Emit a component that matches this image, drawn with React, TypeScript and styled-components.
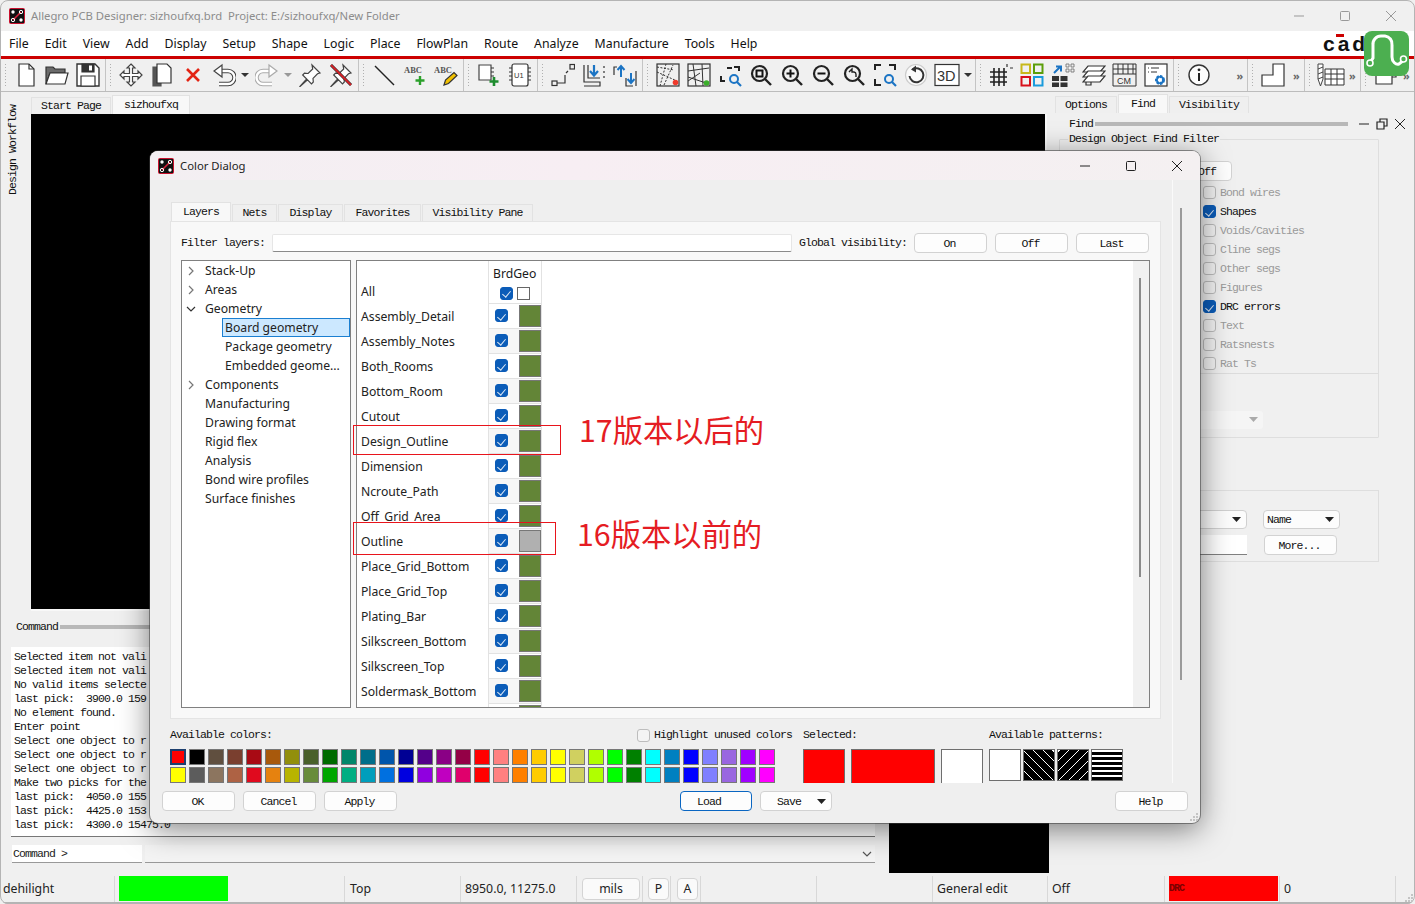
import React from "react";
import styled, { createGlobalStyle } from "styled-components";

const UI_FONT = `"Noto Sans", "Liberation Sans", sans-serif`;
const MONO_FONT = `"Liberation Mono", "DejaVu Sans Mono", monospace`;
const MONO_SPACING = "-0.9px";

const GlobalStyle = createGlobalStyle`
  html, body { margin: 0; padding: 0; background: #f0f0f0; overflow: hidden; }
  * { box-sizing: border-box; }
`;

// ---- shell ----
const AppWindow = styled.div`
  position: relative;
  width: 1415px;
  height: 904px;
  display: flex;
  flex-direction: column;
  background: #f0f0f0;
  overflow: hidden;
  font-family: ${UI_FONT};
  color: #1a1a1a;
  border-radius: 8px;
  outline: 1px solid #b4b4b4;
  outline-offset: -1px;
`;
const TitleBar = styled.div`
  height: 31px;
  flex: none;
  display: flex;
  align-items: center;
  padding-left: 9px;
  gap: 6px;
  color: #8c8c8c;
  font-size: 11.3px;
  white-space: pre;
`;
const WinControls = styled.div`
  margin-left: auto;
  display: flex;
  align-items: center;
  gap: 34px;
  padding-right: 18px;
`;
const MenuBar = styled.div`
  height: 28px;
  flex: none;
  background: #fff;
  border-bottom: 3px solid #cc0000;
  display: flex;
  align-items: center;
  padding-left: 9px;
  gap: 16px;
  font-size: 12.3px;
  color: #111;
`;
const CadenceMark = styled.div`
  position: relative;
  margin-left: auto;
  width: 92px;
  font-family: "Liberation Sans", sans-serif;
  font-weight: 700;
  font-size: 21px;
  letter-spacing: 3px;
  line-height: 25px;
  color: #111;
  &::before {
    content: "";
    position: absolute;
    left: 13px;
    top: 3px;
    width: 8px;
    height: 3px;
    background: #cc0000;
  }
`;
const GreenBadge = styled.div`
  position: absolute;
  left: 1364px;
  top: 31px;
  width: 45px;
  height: 45px;
  z-index: 2;
`;
const Toolbar = styled.div`
  height: 33px;
  flex: none;
  display: flex;
  padding-left: 1px;
  border-bottom: 1px solid #bcbcbc;
  overflow: hidden;
`;
const ToolGroup = styled.div`
  flex: none;
  display: flex;
  align-items: center;
  padding: 0 2px 0 3px;
  border-right: 1px solid #c4c4c4;
`;
const Handle = styled.span`
  width: 3px;
  height: 24px;
  margin-right: 3px;
  background-image: radial-gradient(circle, #b0b0b0 1px, transparent 1px);
  background-size: 3px 3px;
`;
const ToolCell = styled.span`
  flex: none;
  width: 31px;
  height: 26px;
  display: flex;
  align-items: center;
  justify-content: center;
`;
const Caret = styled.span<{ $w?: number; $muted?: boolean }>`
  flex: none;
  width: ${(p) => p.$w ?? 12}px;
  display: flex;
  justify-content: center;
  &::after {
    content: "";
    border-left: 4px solid transparent;
    border-right: 4px solid transparent;
    border-top: 4px solid ${(p) => (p.$muted ? "#999" : "#333")};
  }
`;
const More = styled.span<{ $w?: number; $gap?: number }>`
  flex: none;
  width: ${(p) => p.$w ?? 11}px;
  margin-left: ${(p) => p.$gap ?? 0}px;
  text-align: center;
  font-size: 11px;
  font-weight: 700;
  color: #666;
`;

// ---- main grid ----
const Workspace = styled.div`
  flex: 1;
  min-height: 0;
  display: grid;
  grid-template-columns: 31px 858px 160px 366px;
  grid-template-rows: 22px 497px 1fr;
  grid-template-areas:
    "strip tabs tabs side"
    "strip canvas canvas side"
    "command command lower side";
`;
const Strip = styled.div`
  grid-area: strip;
  display: flex;
  justify-content: center;
  padding: 13px 6px 0 0;
`;
const StripText = styled.span`
  writing-mode: vertical-rl;
  transform: rotate(180deg);
  height: 90px;
  font: 11.5px/12px ${MONO_FONT};
  letter-spacing: ${MONO_SPACING};
  color: #111;
  white-space: nowrap;
`;
const DocTabs = styled.div`
  grid-area: tabs;
  display: flex;
  align-items: flex-end;
`;
const TabBase = styled.div<{ $w: number; $active?: boolean }>`
  flex: none;
  width: ${(p) => p.$w}px;
  height: ${(p) => (p.$active ? 19 : 17)}px;
  margin-right: 1px;
  display: flex;
  align-items: center;
  justify-content: center;
  background: ${(p) => (p.$active ? "#f8f8f8" : "#efefef")};
  border: 1px solid #e2e2e2;
  border-bottom: none;
  font: 11.5px/12px ${MONO_FONT};
  letter-spacing: ${MONO_SPACING};
  color: #111;
  white-space: pre;
`;
const Canvas = styled.div`
  grid-area: canvas;
  background: #000;
  margin-right: 2px;
  border-right: 2px solid #f8f8f8;
  border-bottom: 2px solid #f8f8f8;
`;
const LowerCanvas = styled.div`
  grid-area: lower;
  background: #000;
  margin-top: -2px;
  margin-bottom: 2px;
`;
const CommandPane = styled.div`
  grid-area: command;
  display: flex;
  flex-direction: column;
  padding: 9px 14px 0 11px;
`;
const PaneTitle = styled.div`
  display: flex;
  align-items: center;
  height: 14px;
  padding-left: 5px;
  font: 11.5px/14px ${MONO_FONT};
  letter-spacing: ${MONO_SPACING};
  color: #111;
`;
const GripBar = styled.span`
  flex: 1;
  height: 4px;
  margin-left: 2px;
  background: #b8b8b8;
`;
const CommandLog = styled.pre`
  height: 190px;
  margin: 13px 0 0;
  padding: 3px 0 0 3px;
  background: #fff;
  border-bottom: 1px solid #777;
  overflow: hidden;
  font: 11.5px/14px ${MONO_FONT};
  letter-spacing: ${MONO_SPACING};
  color: #111;
`;
const CommandRow = styled.div`
  display: flex;
  gap: 3px;
  height: 18px;
  margin-top: 8px;
`;
const CommandLabel = styled.div`
  width: 130px;
  margin-left: 1px;
  background: #fff;
  border-bottom: 1px solid #999;
  font: 11.5px/17px ${MONO_FONT};
  letter-spacing: ${MONO_SPACING};
  padding-left: 1px;
  white-space: pre;
`;
const CommandInput = styled.div`
  flex: 1;
  display: flex;
  align-items: center;
  justify-content: flex-end;
  padding-right: 3px;
  background: #f4f4f4;
  border-bottom: 1px solid #999;
`;

// ---- right side ----
const SidePanel = styled.div`
  grid-area: side;
  display: flex;
  flex-direction: column;
  padding-left: 10px;
`;
const SideTabs = styled.div`
  display: flex;
  align-items: flex-end;
  height: 21px;
  margin-left: -4px;
`;
const DockHead = styled.div`
  display: flex;
  align-items: center;
  height: 17px;
  margin-top: 2px;
  padding-left: 10px;
  font: 11.5px/14px ${MONO_FONT};
  letter-spacing: ${MONO_SPACING};
  color: #111;
`;
const DockBar = styled.span`
  width: 253px;
  height: 4px;
  margin-left: 2px;
  background: #b8b8b8;
`;
const DockIcons = styled.span`
  display: flex;
  align-items: center;
  gap: 6px;
  margin-left: 10px;
`;
const FilterSet = styled.fieldset`
  width: 320px;
  height: 305px;
  margin: 1px 0 0;
  padding: 0;
  border: 1px solid #dedede;
  border-radius: 1px;
  display: flex;
  flex-direction: column;
`;
const FilterLegend = styled.legend`
  margin-left: 8px;
  padding: 0 1px;
  font: 11.5px/12px ${MONO_FONT};
  letter-spacing: ${MONO_SPACING};
  color: #111;
`;
const ButtonRow = styled.div`
  display: flex;
  justify-content: flex-end;
  padding: 16px 146px 0 0;
`;
const FindRows = styled.div`
  padding: 2px 0 0 143px;
  border-bottom: 1px solid #dcdcdc;
  height: 193px;
`;
const FindRow = styled.div<{ $on?: boolean }>`
  display: flex;
  align-items: center;
  gap: 4px;
  height: 19px;
  font: 11.5px/12px ${MONO_FONT};
  letter-spacing: ${MONO_SPACING};
  color: ${(p) => (p.$on ? "#111" : "#9a9a9a")};
  white-space: pre;
`;
const DisabledCombo = styled.div`
  width: 110px;
  height: 18px;
  margin: 37px 0 0 93px;
  padding-right: 5px;
  display: flex;
  align-items: center;
  justify-content: flex-end;
  background: #f5f5f5;
  border-radius: 3px;
`;
const PropsBox = styled.div`
  width: 320px;
  height: 72px;
  margin-top: 52px;
  padding: 19px 0 0 100px;
  border: 1px solid #dedede;
  display: grid;
  grid-template-columns: 87px 77px;
  grid-auto-rows: 20px;
  gap: 5px 16px;
`;
const ComboBox = styled.div<{ $w?: number }>`
  height: 19px;
  width: ${(p) => (p.$w ? `${p.$w}px` : "auto")};
  padding: 0 5px 0 3px;
  display: flex;
  align-items: center;
  justify-content: space-between;
  background: #fcfcfc;
  border: 1px solid #d0d0d0;
  border-radius: 4px;
  font: 11.5px/12px ${MONO_FONT};
  letter-spacing: ${MONO_SPACING};
  color: #111;
`;
const PlainInput = styled.div`
  height: 20px;
  background: #fff;
  border-bottom: 1px solid #808080;
`;

// ---- status bar ----
const StatusBar = styled.div`
  height: 29px;
  flex: none;
  display: flex;
  align-items: center;
  font-size: 12.3px;
  color: #222;
  border-bottom: 2px solid #b4b4b4;
`;
const StatusCell = styled.div<{ $w: number; $pad?: number }>`
  flex: none;
  width: ${(p) => p.$w}px;
  height: 26px;
  display: flex;
  align-items: center;
  padding-left: ${(p) => p.$pad ?? 4}px;
  border-right: 1px solid #d8d8d8;
  white-space: nowrap;
`;
const StatusFill = styled.div<{ $w: number; $color: string }>`
  width: ${(p) => p.$w}px;
  height: 25px;
  background: ${(p) => p.$color};
  font: 700 10px/25px ${MONO_FONT};
  color: #7a0000;
  letter-spacing: -1px;
`;
const StatusButton = styled.div<{ $w: number }>`
  width: ${(p) => p.$w}px;
  height: 22px;
  display: flex;
  align-items: center;
  justify-content: center;
  background: #fafafa;
  border: 1px solid #d4d4d4;
  border-radius: 4px;
`;

// ---- dialog ----
const Dialog = styled.div`
  position: absolute;
  left: 150px;
  top: 151px;
  width: 1050px;
  height: 672px;
  display: flex;
  flex-direction: column;
  background: #efefef;
  border-radius: 8px;
  box-shadow: 0 0 0 1px rgba(60, 60, 60, 0.55), 0 6px 30px rgba(0, 0, 0, 0.5);
  z-index: 1;
`;
const DialogHead = styled.div`
  height: 29px;
  flex: none;
  display: flex;
  align-items: center;
  gap: 6px;
  padding-left: 8px;
  border-radius: 8px 8px 0 0;
  background: linear-gradient(90deg, #f3eff2, #f7eef3 40%, #f4f0f1);
  font-size: 11.3px;
  color: #222;
`;
const DialogControls = styled.div`
  margin-left: auto;
  display: flex;
  align-items: center;
  gap: 34px;
  padding-right: 17px;
`;
const DialogMain = styled.div`
  height: 603px;
  flex: none;
  display: flex;
`;
const ScrollArea = styled.div`
  width: 1022px;
  flex: none;
  padding: 22px 0 0 20px;
  overflow: hidden;
`;
const ScrollRail = styled.div`
  flex: 1;
  display: flex;
  justify-content: center;
  padding: 28px 12px 0 0;
  border-left: 1px solid #fafafa;
`;
const RailThumb = styled.span`
  width: 2px;
  height: 472px;
  background: #9a9a9a;
`;
const TabStrip = styled.div`
  display: flex;
  align-items: flex-end;
  height: 19px;
  padding-left: 1px;
`;
const TabPanel = styled.div`
  width: 991px;
  height: 498px;
  padding: 11px 10px 0 10px;
  background: #f8f8f8;
  border: 1px solid #e4e4e4;
`;
const FilterRow = styled.div`
  display: flex;
  align-items: center;
  height: 20px;
`;
const MonoLabel = styled.span<{ $w?: number }>`
  flex: none;
  width: ${(p) => (p.$w ? `${p.$w}px` : "auto")};
  font: 11.5px/12px ${MONO_FONT};
  letter-spacing: ${MONO_SPACING};
  color: #111;
  white-space: pre;
`;
const FilterInput = styled.div`
  width: 520px;
  height: 18px;
  margin-right: 7px;
  background: #fff;
  border: 1px solid #e6e6e6;
  border-bottom-color: #8a8a8a;
  border-radius: 2px;
`;
const Button = styled.div<{ $w?: number; $focus?: boolean; $gap?: number; $between?: boolean; $pull?: number }>`
  flex: none;
  width: ${(p) => p.$w ?? 73}px;
  height: 20px;
  margin-left: ${(p) => p.$gap ?? 0}px;
  display: flex;
  align-items: center;
  justify-content: ${(p) => (p.$between ? "space-between" : "center")};
  padding: ${(p) => (p.$between ? "1px 5px 0 16px" : `1px ${p.$pull ?? 2}px 0 0`)};
  background: #fdfdfd;
  border: 1px solid ${(p) => (p.$focus ? "#0a66c2" : "#d2d2d2")};
  border-radius: 4px;
  font: 11.5px/12px ${MONO_FONT};
  letter-spacing: ${MONO_SPACING};
  color: #111;
`;
const Split = styled.div`
  display: flex;
  gap: 5px;
  margin-top: 7px;
  height: 448px;
`;
const TreePane = styled.div`
  width: 170px;
  flex: none;
  background: #fff;
  border: 1px solid #808080;
`;
const TreeRow = styled.div`
  height: 19px;
  display: flex;
  align-items: center;
  padding-left: 4px;
  font-size: 12.2px;
  white-space: nowrap;
  color: #222;
`;
const TreeArrow = styled.span`
  flex: none;
  width: 19px;
  display: flex;
  align-items: center;
`;
const TreeChild = styled.div<{ $selected?: boolean }>`
  height: 19px;
  margin-left: 40px;
  padding-left: 2px;
  display: flex;
  align-items: center;
  font-size: 12.2px;
  color: #222;
  white-space: nowrap;
  overflow: hidden;
  background: ${(p) => (p.$selected ? "#cce8ff" : "transparent")};
  border: 1px solid ${(p) => (p.$selected ? "#1b7fd1" : "transparent")};
`;
const LayerPane = styled.div`
  flex: 1;
  display: flex;
  background: #fff;
  border: 1px solid #808080;
  overflow: hidden;
`;
const LayerList = styled.div`
  flex: 1;
`;
const LayerRow = styled.div<{ $h?: number }>`
  display: flex;
  height: ${(p) => p.$h ?? 25}px;
`;
const LayerName = styled.div`
  width: 131px;
  flex: none;
  padding-left: 4px;
  display: flex;
  align-items: center;
  font-size: 12.2px;
  color: #222;
  white-space: nowrap;
`;
const LayerCell = styled.div<{ $alt?: boolean }>`
  width: 54px;
  flex: none;
  display: flex;
  align-items: center;
  padding: 0 0 1px 6px;
  background: ${(p) => (p.$alt ? "#f6f6f6" : "#fff")};
  border-left: 1px solid #e2e2e2;
  border-right: 1px solid #e2e2e2;
  border-bottom: 1px solid #e2e2e2;
`;
const HeadCell = styled(LayerCell)`
  padding: 6px 0 0 4px;
  font-size: 12.2px;
  border-bottom: none;
`;
const AllCell = styled(LayerCell)`
  padding: 5px 0 1px 11px;
  gap: 4px;
`;
const LayerSwatch = styled.span<{ $color: string }>`
  align-self: flex-end;
  width: 22px;
  height: 22px;
  margin-left: auto;
  background: ${(p) => p.$color};
  border: 1px solid #777;
`;
const EmptyBox = styled.span`
  width: 13px;
  height: 13px;
  background: #fff;
  border: 1px solid #666;
`;
const ListRail = styled.div`
  width: 16px;
  flex: none;
  padding: 17px 0 0 6px;
  background: #f1f1f1;
`;
const ListThumb = styled.div`
  width: 2px;
  height: 299px;
  background: #8a8a8a;
`;
const Check = styled.span<{ $on?: boolean }>`
  position: relative;
  flex: none;
  width: 13px;
  height: 13px;
  border-radius: 3px;
  background: ${(p) => (p.$on ? "#0b5cb8" : "#f4f4f4")};
  border: 1px solid ${(p) => (p.$on ? "#0b5cb8" : "#bdbdbd")};
  &::after {
    content: "";
    display: ${(p) => (p.$on ? "block" : "none")};
    position: absolute;
    left: 3px;
    top: 1.5px;
    width: 4px;
    height: 7px;
    border-right: 1px solid #dfe9f5;
    border-bottom: 1px solid #dfe9f5;
    transform: rotate(40deg);
  }
`;
const ColorSection = styled.div`
  display: flex;
  padding-top: 10px;
`;
const ColorCol = styled.div<{ $w: number }>`
  flex: none;
  width: ${(p) => p.$w}px;
`;
const ColorHead = styled.div`
  display: flex;
  align-items: center;
  justify-content: space-between;
  width: 622px;
  height: 12px;
  margin-bottom: 8px;
`;
const HighlightOpt = styled.span`
  display: flex;
  align-items: center;
  gap: 4px;
`;
const ColorGrid = styled.div`
  display: grid;
  grid-template-columns: repeat(32, 16px);
  grid-auto-rows: 16px;
  gap: 2px 3px;
`;
const ColorChip = styled.span<{ $color: string; $current?: boolean }>`
  background: ${(p) => p.$color};
  border: ${(p) => (p.$current ? "2px solid #1d3f6e" : "1px solid #777")};
`;
const SwatchRow = styled.div`
  display: flex;
`;
const BigSwatch = styled.span<{ $w: number; $color: string; $gap?: number }>`
  flex: none;
  width: ${(p) => p.$w}px;
  height: 42px;
  margin-left: ${(p) => p.$gap ?? 0}px;
  background: ${(p) => p.$color};
  border: 1px solid #6e6e6e;
`;
const PatternChip = styled.span<{ $fill: string; $gap?: number }>`
  flex: none;
  width: 32px;
  height: 32px;
  margin-left: ${(p) => p.$gap ?? 0}px;
  background: ${(p) => p.$fill};
  border: 1px solid #6e6e6e;
`;
const DialogFoot = styled.div`
  flex: 1;
  display: flex;
  align-items: flex-start;
  padding: 8px 12px 0;
  gap: 8px;
`;
const FootSpace = styled.span<{ $w?: number }>`
  flex: ${(p) => (p.$w ? "none" : "1")};
  width: ${(p) => p.$w ?? 0}px;
`;
const CornerGrip = styled.svg`
  position: absolute;
  right: 2px;
  bottom: 2px;
`;

// ---- annotations drawn over the dialog ----
const MarkBox = styled.div<{ $x: number; $y: number; $w: number; $h: number }>`
  position: absolute;
  left: ${(p) => p.$x}px;
  top: ${(p) => p.$y}px;
  width: ${(p) => p.$w}px;
  height: ${(p) => p.$h}px;
  border: 1px solid #e8141c;
  pointer-events: none;
`;
const MarkText = styled.div<{ $x: number; $y: number }>`
  position: absolute;
  left: ${(p) => p.$x}px;
  top: ${(p) => p.$y}px;
  font-family: "Noto Sans CJK SC", sans-serif;
  font-size: 30.3px;
  line-height: 36px;
  color: #e51c23;
  white-space: nowrap;
`;

// ---- drawings ----
const Ico: React.FC<{ size?: number; children: React.ReactNode }> = ({ size = 24, children }) => (
  <svg width={size} height={size} viewBox="0 0 24 24" fill="none" stroke="#333" strokeWidth={1.2}>
    {children}
  </svg>
);

const AppLogo = () => (
  <svg width="16" height="16" viewBox="0 0 16 16">
    <rect x="0" y="0" width="16" height="16" rx="2" fill="#c8102e" />
    <rect x="1" y="1" width="14" height="14" fill="#111" />
    <path d="M4 12L12 4" stroke="#d8203a" strokeWidth="1.6" />
    <circle cx="4" cy="4" r="1.7" fill="#fff" />
    <circle cx="12" cy="4" r="1.7" fill="none" stroke="#fff" />
    <circle cx="4" cy="12" r="1.7" fill="none" stroke="#fff" />
    <circle cx="12" cy="12" r="1.7" fill="#fff" />
  </svg>
);
const WinMin: React.FC<{ color: string }> = ({ color }) => (
  <svg width="12" height="12" viewBox="0 0 12 12"><path d="M1 6h10" stroke={color} /></svg>
);
const WinMax: React.FC<{ color: string }> = ({ color }) => (
  <svg width="12" height="12" viewBox="0 0 12 12"><rect x="1.5" y="1.5" width="9" height="9" rx="1" fill="none" stroke={color} /></svg>
);
const WinClose: React.FC<{ color: string }> = ({ color }) => (
  <svg width="12" height="12" viewBox="0 0 12 12"><path d="M1 1l10 10M11 1L1 11" stroke={color} /></svg>
);
const Chevron: React.FC<{ open?: boolean; color?: string }> = ({ open, color = "#777" }) => (
  <svg width="10" height="10" viewBox="0 0 10 10">
    <path d={open ? "M1 3l4 4 4-4" : "M3 1l4 4-4 4"} fill="none" stroke={color} strokeWidth="1.2" />
  </svg>
);
const DownTri: React.FC<{ color?: string }> = ({ color = "#222" }) => (
  <svg width="9" height="6" viewBox="0 0 9 6"><path d="M0 0h9L4.5 5z" fill={color} /></svg>
);

const Magnifier: React.FC<{ children?: React.ReactNode }> = ({ children }) => (
  <Ico>
    <circle cx="10.5" cy="10.5" r="7.5" strokeWidth={2.2} stroke="#222" />
    <path d="M16 16l6 6" strokeWidth={2.4} stroke="#222" />
    {children}
  </Ico>
);
const FrameZoom: React.FC<{ wide?: boolean }> = ({ wide }) => (
  <Ico>
    <path d={wide ? "M2 7V2h6M16 2h6v5M2 16v6h6" : "M9 5h5M3 13v5h4"} strokeWidth={2} stroke="#222" />
    {!wide && <path d="M16 4h5v4" strokeWidth={2} stroke="#222" />}
    <circle cx="16" cy="16" r="4" strokeWidth={2} stroke="#1b74c4" />
    <path d="M19 19l4 4" strokeWidth={2.2} stroke="#1b74c4" />
  </Ico>
);

const PinShape = "M14 2l8 8-2.5.8-4.5 4.6.3 3.6-1.8 1.8-4-4-8 7.2 7.2-8-4-4 1.8-1.8 3.6.3 4.6-4.5z";

const tools = {
  newDoc: (
    <Ico>
      <path d="M5 1h10l5 5v17H5z" fill="#fff" />
      <path d="M15 1v5h5" />
    </Ico>
  ),
  open: (
    <Ico>
      <path d="M1 21V4h7l2 2h10v4H5z" fill="#6a6a6a" />
      <path d="M1 21L5 10h18l-3 11z" fill="#fff" />
    </Ico>
  ),
  save: (
    <Ico>
      <path d="M1 1h18l4 4v18H1z" fill="#fff" strokeWidth={1.4} />
      <path d="M6 1h12v8H6z" fill="#333" />
      <path d="M13 2.5h3v5h-3z" fill="#fff" stroke="none" />
      <path d="M5 13h14v10H5z" fill="#fff" />
    </Ico>
  ),
  move: (
    <Ico>
      <path
        d="M12 1l4 4h-2.5v5.5H19V8l4 4-4 4v-2.5h-5.5V19H16l-4 4-4-4h2.5v-5.5H5V16l-4-4 4-4v2.5h5.5V5H8z"
        fill="#fff"
        stroke="#444"
      />
    </Ico>
  ),
  copy: (
    <Ico>
      <path d="M3 4h8v19H3z" fill="#555" stroke="#555" />
      <path d="M7 1h10l4 4v15H7z" fill="#fff" />
    </Ico>
  ),
  remove: (
    <Ico>
      <path d="M6 6l12 12M18 6L6 18" stroke="#e32414" strokeWidth={2.6} />
    </Ico>
  ),
  undo: (
    <Ico>
      <path d="M8 8h8a6 6 0 0 1 0 13H7" stroke="#444" strokeWidth={4.5} />
      <path d="M8 8h8a6 6 0 0 1 0 13H7" stroke="#fff" strokeWidth={2.4} />
      <path d="M10 2L2 8l8 6z" fill="#fff" stroke="#444" />
    </Ico>
  ),
  redo: (
    <Ico>
      <path d="M16 8H8a6 6 0 0 0 0 13h9" stroke="#aaa" strokeWidth={4.5} />
      <path d="M16 8H8a6 6 0 0 0 0 13h9" stroke="#fff" strokeWidth={2.4} />
      <path d="M14 2l8 6-8 6z" fill="#fff" stroke="#aaa" />
    </Ico>
  ),
  pin: (
    <Ico>
      <path d={PinShape} fill="#fff" stroke="#444" />
    </Ico>
  ),
  unpin: (
    <Ico>
      <path d={PinShape} fill="#fff" stroke="#444" />
      <path d="M2 2l20 20" stroke="#222" strokeWidth={3} />
      <path d="M2 2l20 20" stroke="#d8242a" strokeWidth={1.8} />
    </Ico>
  ),
  line: (
    <Ico>
      <path d="M3 3l19 19" stroke="#222" strokeWidth={1.4} />
    </Ico>
  ),
  abcAdd: (
    <Ico>
      <text x="1" y="10" fontFamily="Liberation Serif" fontWeight="700" fontSize="8.5" fill="#555" stroke="none">ABC</text>
      <path d="M17 13v9M12.5 17.5h9" stroke="#2ba02b" strokeWidth={2.4} />
    </Ico>
  ),
  abcEdit: (
    <Ico>
      <text x="0" y="10" fontFamily="Liberation Serif" fontWeight="700" fontSize="8.5" fill="#555" stroke="none">ABC</text>
      <path d="M10 22l1.5-5L20 9.5l3 3-8.5 8z" fill="#f2c100" stroke="#333" />
    </Ico>
  ),
  part: (
    <Ico>
      <path d="M2 2h12v15H2z" fill="#fff" stroke="#444" />
      <path d="M14 5h3M14 9h3M14 13h3" />
      <path d="M17 14v9M12.5 18.5h9" stroke="#1e8c2e" strokeWidth={2.6} />
    </Ico>
  ),
  chip: (
    <Ico>
      <rect x="4" y="1" width="16" height="22" rx="2" fill="#fff" />
      <path d="M1 5h3M1 9h3M1 13h3M1 17h3M20 5h3M20 9h3M20 13h3M20 17h3" />
      <text x="6" y="15" fontFamily="Liberation Sans" fontSize="7.5" fill="#333" stroke="none">U1</text>
    </Ico>
  ),
  route: (
    <Ico>
      <rect x="1" y="18" width="5" height="4.5" />
      <path d="M6 20h8v-8" />
      <path d="M15 10l2-2" />
      <rect x="19" y="1.5" width="4.5" height="4.5" />
    </Ico>
  ),
  slide: (
    <Ico>
      <path d="M2 2v17h16v4H2M6 2v13h12" />
      <path d="M12 2v9M8 8l4 4.5L16 8" stroke="#1b74c4" strokeWidth={2.2} />
      <path d="M22 3v2M22 8v2M22 13v2" />
    </Ico>
  ),
  swap: (
    <Ico>
      <path d="M1 12V4h3M20 23h-7v-8M23 8v15" />
      <path d="M8 14V3M4.5 7L8 3l3.5 4" stroke="#1b74c4" strokeWidth={2} />
      <path d="M18 10v10M14.5 16l3.5 4 3.5-4" stroke="#1b74c4" strokeWidth={2} />
    </Ico>
  ),
  ratsRed: (
    <Ico>
      <rect x="1" y="1" width="22" height="22" />
      <path d="M1 9l20 9M4 23L10 1M1 4l17 3M8 22l9-20" strokeDasharray="2 1.5" strokeWidth={1} />
      <circle cx="19.5" cy="19.5" r="2.8" fill="#f03a2c" stroke="none" />
    </Ico>
  ),
  ratsGreen: (
    <Ico>
      <rect x="1" y="1" width="22" height="22" />
      <path d="M1 8l21-3M6 1l3 22M15 1l1 22M1 14l21 7M1 18l12-8" strokeWidth={1} />
      <circle cx="19.5" cy="20" r="2.8" fill="#3aae2a" stroke="none" />
    </Ico>
  ),
  zoomFrame: <FrameZoom />,
  zoomFit: (
    <Magnifier>
      <rect x="7.5" y="7.5" width="6" height="6" stroke="#111" strokeWidth={2} />
    </Magnifier>
  ),
  zoomIn: (
    <Magnifier>
      <path d="M6.5 10.5h8M10.5 6.5v8" strokeWidth={2} stroke="#111" />
    </Magnifier>
  ),
  zoomOut: (
    <Magnifier>
      <path d="M6.5 10.5h8" strokeWidth={2} stroke="#111" />
    </Magnifier>
  ),
  zoomPrev: (
    <Magnifier>
      <path d="M7 9l3-3v3h2a2.5 2.5 0 0 1 2 2.5V14" strokeWidth={1.4} stroke="#222" />
    </Magnifier>
  ),
  zoomWide: <FrameZoom wide />,
  redraw: (
    <Ico>
      <circle cx="12" cy="12" r="10.5" stroke="#ccc" strokeWidth={1.2} fill="#fafafa" />
      <path d="M8.5 6.5A7 7 0 1 1 5.5 13" stroke="#333" strokeWidth={2} />
      <path d="M12 2.5L7 6.5l5 3z" fill="#333" stroke="none" />
    </Ico>
  ),
  threeD: (
    <svg width="26" height="24" viewBox="0 0 26 24">
      <rect x="1" y="1.5" width="24" height="21" fill="#fff" stroke="#333" strokeWidth="1.2" />
      <text x="3" y="17.5" fontFamily="Liberation Sans" fontSize="14.5" fill="#333">3D</text>
    </svg>
  ),
  grid: (
    <Ico>
      <path d="M1 9h17M1 14h17M1 19h17M5 5v18M10 5v18M15 5v18" strokeWidth={1.6} stroke="#222" />
      <path d="M18 1v3M21 5h3" strokeWidth={1.2} />
    </Ico>
  ),
  colors: (
    <Ico>
      <rect x="1.5" y="1.5" width="8.5" height="8.5" stroke="#c8b81a" strokeWidth={2} />
      <rect x="14" y="1.5" width="8.5" height="8.5" stroke="#5c9e0a" strokeWidth={2} />
      <rect x="1.5" y="14" width="8.5" height="8.5" stroke="#d8101a" strokeWidth={2} />
      <rect x="14" y="14" width="8.5" height="8.5" stroke="#1a9bdc" strokeWidth={2} />
    </Ico>
  ),
  arrange: (
    <Ico>
      <path d="M1 13h7v5H1zM9.5 13h7v5h-7zM1 19.5h7V24H1zM9.5 19.5h7V24h-7z" fill="#333" stroke="none" />
      <path d="M3 10l6-6M5 3.5h5v5" stroke="#1b74c4" strokeWidth={2} />
      <path d="M15 1h3v3h-3zM20 1h3v3h-3zM15 6h3v3h-3zM20 6h3v3h-3z" stroke="#777" strokeWidth={0.9} />
    </Ico>
  ),
  layers: (
    <Ico>
      <path d="M6 3h17l-5 6H1z" fill="#fff" />
      <path d="M6 8h17l-5 6H1z" fill="#fff" />
      <path d="M6 13h17l-5 6H1z" fill="#fff" />
      <path d="M4 19v3h5v-3" />
    </Ico>
  ),
  cmTable: (
    <svg width="25" height="24" viewBox="0 0 25 24">
      <path d="M1 1h23v22H1zM1 6h23M1 11h23M6 1v10M11 1v10M16 1v10M21 1v10" fill="none" stroke="#333" strokeWidth="1" />
      <text x="5" y="21" fontFamily="Liberation Sans" fontSize="9" fill="#333">CM</text>
    </svg>
  ),
  setup: (
    <Ico>
      <rect x="1" y="1" width="22" height="22" fill="#fff" />
      <path d="M4 5h1M7 5h8M4 9h1M7 9h6" strokeWidth={1} />
      <circle cx="16" cy="17" r="3.5" stroke="#1b74c4" strokeWidth={3} strokeDasharray="2.2 1" />
      <circle cx="16" cy="17" r="3.2" stroke="#1b74c4" strokeWidth={1.6} />
    </Ico>
  ),
  info: (
    <Ico>
      <circle cx="12" cy="12" r="10" stroke="#333" strokeWidth={1.4} fill="#fdfdfd" />
      <path d="M12 10v8" strokeWidth={2} stroke="#222" />
      <circle cx="12" cy="6.8" r="1.4" fill="#222" stroke="none" />
    </Ico>
  ),
  outline: (
    <Ico>
      <path d="M1 23V12h11V1h11v22z" fill="#fff" />
    </Ico>
  ),
  drillTable: (
    <svg width="30" height="24" viewBox="0 0 30 24">
      <path d="M3 1h5v15l-2.5 7L3 16zM3 6l5-2M3 11l5-2M3 16l5-2" fill="#fff" stroke="#444" />
      <path d="M10 6h19v16H10zM10 11h19M10 16h19M16 6v16M22 6v16" fill="#fff" stroke="#333" />
    </svg>
  ),
  board: (
    <Ico>
      <path d="M5 8V3h10v5M2 8h16v13H2zM18 10h4v4h-4" fill="#fff" />
    </Ico>
  ),
};

const Dock = () => (
  <svg width="12" height="12" viewBox="0 0 12 12">
    <path d="M1 4h7v7H1zM4 4V1h7v7H8" fill="none" stroke="#222" strokeWidth="1.2" />
  </svg>
);

// ---- data ----
const MENUS = ["File", "Edit", "View", "Add", "Display", "Setup", "Shape", "Logic", "Place", "FlowPlan", "Route", "Analyze", "Manufacture", "Tools", "Help"];
// the rest of each line sits behind the dialog
const LOG = `Selected item not vali
Selected item not vali
No valid items selecte
last pick:  3900.0 159
No element found.
Enter point
Select one object to r
Select one object to r
Select one object to r
Make two picks for the
last pick:  4050.0 155
last pick:  4425.0 153
last pick:  4300.0 15475.0`;
const FIND_ROWS: [string, boolean][] = [
  ["Bond wires", false], ["Shapes", true], ["Voids/Cavities", false], ["Cline segs", false], ["Other segs", false],
  ["Figures", false], ["DRC errors", true], ["Text", false], ["Ratsnests", false], ["Rat Ts", false],
];
const LAYERS = [
  "Assembly_Detail", "Assembly_Notes", "Both_Rooms", "Bottom_Room", "Cutout", "Design_Outline", "Dimension", "Ncroute_Path",
  "Off_Grid_Area", "Outline", "Place_Grid_Bottom", "Place_Grid_Top", "Plating_Bar", "Silkscreen_Bottom", "Silkscreen_Top",
  "Soldermask_Bottom", "",
];
const BRIGHT = ["#ff0000", "#ff8080", "#ff8000", "#ffcc00", "#ffff00", "#d0d060", "#b0ff00", "#00ff00", "#008000", "#00ffff", "#0080c0", "#0000ff", "#8080ff", "#9966e0", "#a000ff", "#ff00ff"];
const COLORS = [
  "#ff0000", "#000000", "#604f3f", "#7a3f2f", "#a80a14", "#a8590c", "#928f0c", "#49602a", "#006b00", "#00866a", "#006e8a", "#0055ab", "#000094", "#54008a", "#8a0085", "#940046",
  ...BRIGHT,
  "#ffff00", "#5c5c5c", "#8c755f", "#ae6244", "#e00a1e", "#e6820f", "#b8b400", "#688c3a", "#00a600", "#00ae82", "#009ebc", "#0070e0", "#0000e0", "#9000e0", "#c000c0", "#e0006c",
  ...BRIGHT,
];
const HATCH_DOWN = "repeating-linear-gradient(45deg, #000 0 6px, #fff 6px 7px)";
const HATCH_UP = "repeating-linear-gradient(-45deg, #000 0 6px, #fff 6px 7px)";
const HATCH_FLAT = "repeating-linear-gradient(0deg, #000 0 3px, #fff 3px 5px)";

const App: React.FC = () => (
  <AppWindow>
    <GlobalStyle />
    <TitleBar>
      <AppLogo />
      <span>Allegro PCB Designer: sizhoufxq.brd  Project: E:/sizhoufxq/New Folder</span>
      <WinControls>
        <WinMin color="#999" />
        <WinMax color="#999" />
        <WinClose color="#999" />
      </WinControls>
    </TitleBar>
    <MenuBar>
      {MENUS.map((m) => (
        <span key={m}>{m}</span>
      ))}
      <CadenceMark>cade</CadenceMark>
    </MenuBar>
    <GreenBadge>
      <svg width="45" height="45" viewBox="0 0 45 45">
        <rect width="45" height="45" rx="8" fill="#4caf50" />
        <path d="M6 32l3-5V14a8 8 0 0 1 8-9h4a8 8 0 0 1 7 9v12c0 5 4 8 7 7l5-4" fill="none" stroke="#fff" strokeWidth="3" />
        <circle cx="6" cy="32" r="3" fill="#4caf50" stroke="#fff" strokeWidth="1.6" />
        <circle cx="39.5" cy="28" r="3" fill="#4caf50" stroke="#fff" strokeWidth="1.6" />
      </svg>
    </GreenBadge>
    <Toolbar>
      <ToolGroup>
        <Handle />
        <ToolCell>{tools.newDoc}</ToolCell>
        <ToolCell>{tools.open}</ToolCell>
        <ToolCell>{tools.save}</ToolCell>
      </ToolGroup>
      <ToolGroup>
        <Handle />
        <ToolCell>{tools.move}</ToolCell>
        <ToolCell>{tools.copy}</ToolCell>
        <ToolCell>{tools.remove}</ToolCell>
        <ToolCell>{tools.undo}</ToolCell>
        <Caret />
        <ToolCell>{tools.redo}</ToolCell>
        <Caret $muted />
        <ToolCell>{tools.pin}</ToolCell>
        <ToolCell>{tools.unpin}</ToolCell>
      </ToolGroup>
      <ToolGroup>
        <Handle />
        <ToolCell>{tools.line}</ToolCell>
        <ToolCell>{tools.abcAdd}</ToolCell>
        <ToolCell>{tools.abcEdit}</ToolCell>
      </ToolGroup>
      <ToolGroup>
        <Handle />
        <ToolCell>{tools.part}</ToolCell>
        <ToolCell>{tools.chip}</ToolCell>
      </ToolGroup>
      <ToolGroup>
        <Handle />
        <ToolCell>{tools.route}</ToolCell>
        <ToolCell>{tools.slide}</ToolCell>
        <ToolCell>{tools.swap}</ToolCell>
      </ToolGroup>
      <ToolGroup>
        <Handle />
        <ToolCell>{tools.ratsRed}</ToolCell>
        <ToolCell>{tools.ratsGreen}</ToolCell>
        <ToolCell>{tools.zoomFrame}</ToolCell>
        <ToolCell>{tools.zoomFit}</ToolCell>
        <ToolCell>{tools.zoomIn}</ToolCell>
        <ToolCell>{tools.zoomOut}</ToolCell>
        <ToolCell>{tools.zoomPrev}</ToolCell>
        <ToolCell>{tools.zoomWide}</ToolCell>
        <ToolCell>{tools.redraw}</ToolCell>
        <ToolCell>{tools.threeD}</ToolCell>
        <Caret $w={11} />
      </ToolGroup>
      <ToolGroup>
        <Handle />
        <ToolCell>{tools.grid}</ToolCell>
        <ToolCell>{tools.colors}</ToolCell>
        <ToolCell>{tools.arrange}</ToolCell>
        <ToolCell>{tools.layers}</ToolCell>
        <ToolCell>{tools.cmTable}</ToolCell>
        <ToolCell>{tools.setup}</ToolCell>
      </ToolGroup>
      <ToolGroup>
        <Handle />
        <ToolCell>{tools.info}</ToolCell>
        <More $gap={21} $w={10}>»</More>
      </ToolGroup>
      <ToolGroup>
        <Handle />
        <ToolCell>{tools.outline}</ToolCell>
        <More $gap={3}>»</More>
      </ToolGroup>
      <ToolGroup>
        <Handle />
        <ToolCell>{tools.drillTable}</ToolCell>
        <More $gap={2}>»</More>
      </ToolGroup>
      <ToolGroup>
        <Handle />
        <ToolCell>{tools.board}</ToolCell>
        <More>»</More>
      </ToolGroup>
    </Toolbar>
    <Workspace>
      <Strip>
        <StripText>Design Workflow</StripText>
      </Strip>
      <DocTabs>
        <TabBase $w={80}>Start Page</TabBase>
        <TabBase $w={78} $active>sizhoufxq</TabBase>
      </DocTabs>
      <Canvas />
      <LowerCanvas />
      <CommandPane>
        <PaneTitle>
          Command
          <GripBar />
        </PaneTitle>
        <CommandLog>{LOG}</CommandLog>
        <CommandRow>
          <CommandLabel>Command &gt;</CommandLabel>
          <CommandInput>
            <Chevron open color="#555" />
          </CommandInput>
        </CommandRow>
      </CommandPane>
      <SidePanel>
        <SideTabs>
          <TabBase $w={62}>Options</TabBase>
          <TabBase $w={50} $active>Find</TabBase>
          <TabBase $w={80}>Visibility</TabBase>
        </SideTabs>
        <DockHead>
          Find
          <DockBar />
          <DockIcons>
            <WinMin color="#222" />
            <Dock />
            <WinClose color="#222" />
          </DockIcons>
        </DockHead>
        <FilterSet>
          <FilterLegend>Design Object Find Filter</FilterLegend>
          <ButtonRow>
            <Button $w={72}>All Off</Button>
          </ButtonRow>
          <FindRows>
            {FIND_ROWS.map(([name, on]) => (
              <FindRow key={name} $on={on}>
                <Check $on={on} />
                {name}
              </FindRow>
            ))}
          </FindRows>
          <DisabledCombo>
            <DownTri color="#aaa" />
          </DisabledCombo>
        </FilterSet>
        <PropsBox>
          <ComboBox>
            <span />
            <DownTri />
          </ComboBox>
          <ComboBox>
            Name
            <DownTri />
          </ComboBox>
          <PlainInput />
          <Button $gap={1}>More...</Button>
        </PropsBox>
      </SidePanel>
    </Workspace>
    <StatusBar>
      <StatusCell $w={115} $pad={3}>dehilight</StatusCell>
      <StatusCell $w={230}>
        <StatusFill $w={109} $color="#00ff00" />
      </StatusCell>
      <StatusCell $w={116} $pad={5}>Top</StatusCell>
      <StatusCell $w={116}>8950.0, 11275.0</StatusCell>
      <StatusCell $w={66} $pad={5}>
        <StatusButton $w={58}>mils</StatusButton>
      </StatusCell>
      <StatusCell $w={28} $pad={5}>
        <StatusButton $w={21}>P</StatusButton>
      </StatusCell>
      <StatusCell $w={30} $pad={6}>
        <StatusButton $w={21}>A</StatusButton>
      </StatusCell>
      <StatusCell $w={116} />
      <StatusCell $w={116} />
      <StatusCell $w={115}>General edit</StatusCell>
      <StatusCell $w={117}>Off</StatusCell>
      <StatusCell $w={115}>
        <StatusFill $w={109} $color="#ff0000">DRC</StatusFill>
      </StatusCell>
      <StatusCell $w={116}>0</StatusCell>
    </StatusBar>
    <CornerGrip width="9" height="9" viewBox="0 0 9 9">
      <path d="M7 1h2v2H7zM4 4h2v2H4zM7 4h2v2H7zM1 7h2v2H1zM4 7h2v2H4zM7 7h2v2H7z" fill="#c4c4c4" />
    </CornerGrip>

    <Dialog>
      <DialogHead>
        <AppLogo />
        <span>Color Dialog</span>
        <DialogControls>
          <WinMin color="#222" />
          <WinMax color="#222" />
          <WinClose color="#222" />
        </DialogControls>
      </DialogHead>
      <DialogMain>
        <ScrollArea>
          <TabStrip>
            <TabBase $w={60} $active>Layers</TabBase>
            <TabBase $w={45}>Nets</TabBase>
            <TabBase $w={65}>Display</TabBase>
            <TabBase $w={77}>Favorites</TabBase>
            <TabBase $w={111}>Visibility Pane</TabBase>
          </TabStrip>
          <TabPanel>
            <FilterRow>
              <MonoLabel $w={91}>Filter layers:</MonoLabel>
              <FilterInput />
              <MonoLabel $w={115}>Global visibility:</MonoLabel>
              <Button>On</Button>
              <Button $gap={8}>Off</Button>
              <Button $gap={8}>Last</Button>
            </FilterRow>
            <Split>
              <TreePane>
                <TreeRow><TreeArrow><Chevron /></TreeArrow>Stack-Up</TreeRow>
                <TreeRow><TreeArrow><Chevron /></TreeArrow>Areas</TreeRow>
                <TreeRow><TreeArrow><Chevron open color="#333" /></TreeArrow>Geometry</TreeRow>
                <TreeChild $selected>Board geometry</TreeChild>
                <TreeChild>Package geometry</TreeChild>
                <TreeChild>Embedded geome...</TreeChild>
                <TreeRow><TreeArrow><Chevron /></TreeArrow>Components</TreeRow>
                <TreeRow><TreeArrow />Manufacturing</TreeRow>
                <TreeRow><TreeArrow />Drawing format</TreeRow>
                <TreeRow><TreeArrow />Rigid flex</TreeRow>
                <TreeRow><TreeArrow />Analysis</TreeRow>
                <TreeRow><TreeArrow />Bond wire profiles</TreeRow>
                <TreeRow><TreeArrow />Surface finishes</TreeRow>
              </TreePane>
              <LayerPane>
                <LayerList>
                  <LayerRow $h={18}>
                    <LayerName />
                    <HeadCell>BrdGeo</HeadCell>
                  </LayerRow>
                  <LayerRow>
                    <LayerName>All</LayerName>
                    <AllCell>
                      <Check $on />
                      <EmptyBox />
                    </AllCell>
                  </LayerRow>
                  {LAYERS.map((name, i) => (
                    <LayerRow key={i}>
                      <LayerName>{name}</LayerName>
                      <LayerCell $alt={i % 2 === 1}>
                        <Check $on />
                        <LayerSwatch $color={name === "Outline" ? "#b0b0b0" : "#638537"} />
                      </LayerCell>
                    </LayerRow>
                  ))}
                </LayerList>
                <ListRail>
                  <ListThumb />
                </ListRail>
              </LayerPane>
            </Split>
          </TabPanel>
          <ColorSection>
            <ColorCol $w={633}>
              <ColorHead>
                <MonoLabel>Available colors:</MonoLabel>
                <HighlightOpt>
                  <Check />
                  <MonoLabel>Highlight unused colors</MonoLabel>
                </HighlightOpt>
              </ColorHead>
              <ColorGrid>
                {COLORS.map((c, i) => (
                  <ColorChip key={i} $color={c} $current={i === 0} />
                ))}
              </ColorGrid>
            </ColorCol>
            <ColorCol $w={186}>
              <ColorHead>
                <MonoLabel>Selected:</MonoLabel>
              </ColorHead>
              <SwatchRow>
                <BigSwatch $w={42} $color="#ff0000" />
                <BigSwatch $w={84} $gap={6} $color="#ff0000" />
                <BigSwatch $w={42} $gap={6} $color="#fff" />
              </SwatchRow>
            </ColorCol>
            <ColorCol $w={140}>
              <ColorHead>
                <MonoLabel>Available patterns:</MonoLabel>
              </ColorHead>
              <SwatchRow>
                <PatternChip $fill="#fff" />
                <PatternChip $fill={HATCH_DOWN} $gap={2} />
                <PatternChip $fill={HATCH_UP} $gap={2} />
                <PatternChip $fill={HATCH_FLAT} $gap={2} />
              </SwatchRow>
            </ColorCol>
          </ColorSection>
        </ScrollArea>
        <ScrollRail>
          <RailThumb />
        </ScrollRail>
      </DialogMain>
      <DialogFoot>
        <Button>OK</Button>
        <Button>Cancel</Button>
        <Button>Apply</Button>
        <FootSpace $w={267} />
        <Button $w={72} $focus $pull={14}>Load</Button>
        <Button $w={72} $between>
          Save
          <DownTri />
        </Button>
        <FootSpace />
        <Button>Help</Button>
      </DialogFoot>
      <CornerGrip width="9" height="9" viewBox="0 0 9 9">
        <path d="M7 1h2v2H7zM4 4h2v2H4zM7 4h2v2H7zM1 7h2v2H1zM4 7h2v2H4zM7 7h2v2H7z" fill="#c4c4c4" />
      </CornerGrip>
      <MarkBox $x={203} $y={274} $w={208} $h={30} />
      <MarkBox $x={203} $y={371} $w={203} $h={33} />
      <MarkText $x={429} $y={260}>17版本以后的</MarkText>
      <MarkText $x={427} $y={364}>16版本以前的</MarkText>
    </Dialog>
  </AppWindow>
);

export default App;
